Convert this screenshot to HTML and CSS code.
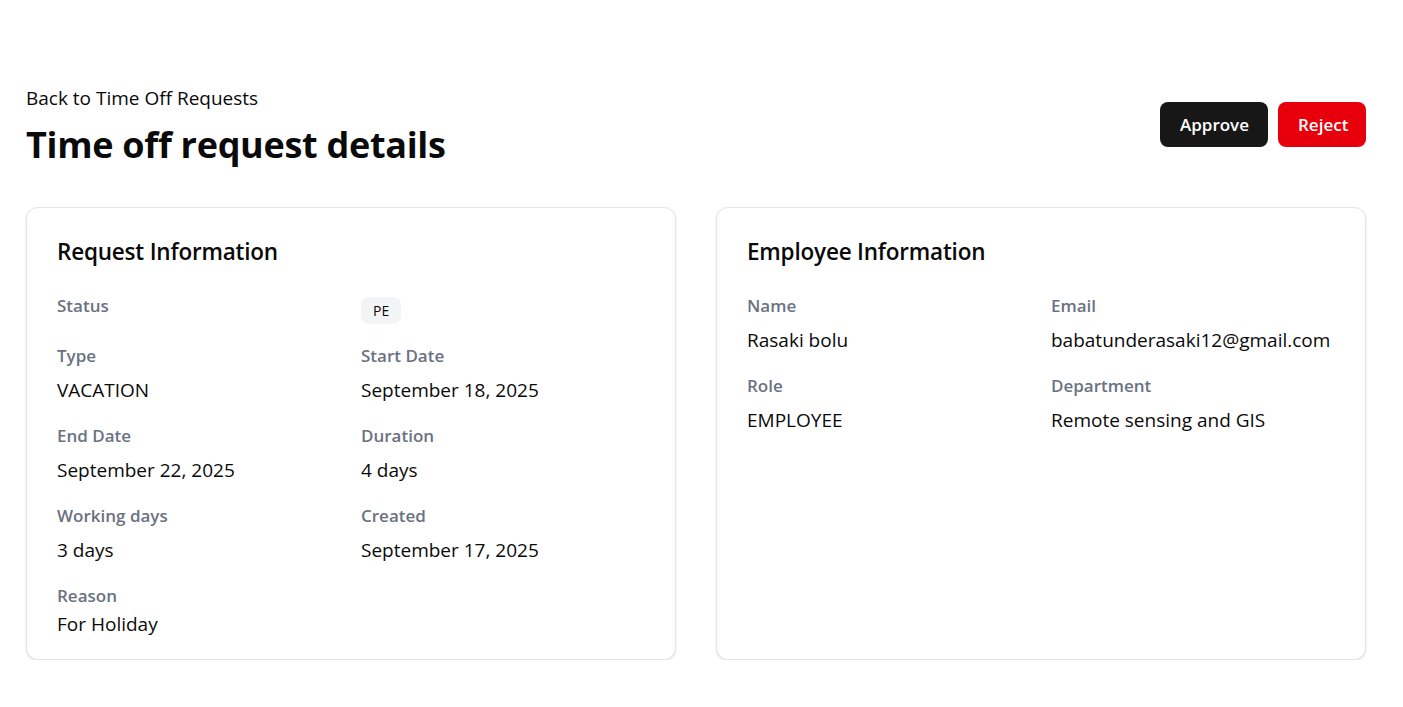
FILE: index.html
```html
<!DOCTYPE html>
<html lang="en">
<head>
<meta charset="utf-8">
<title>Time off request details</title>
<link rel="stylesheet" href="styles.css">
</head>
<body>
<main class="page">
  <header class="page-header">
    <div class="title-block">
      <a class="back-link" href="#">Back to Time Off Requests</a>
      <h1 class="page-title">Time off request details</h1>
    </div>
    <div class="actions">
      <button class="btn btn-approve" type="button">Approve</button>
      <button class="btn btn-reject" type="button">Reject</button>
    </div>
  </header>

  <section class="cards">
    <article class="card">
      <h2 class="card-title">Request Information</h2>
      <div class="info-grid">
        <div class="label">Status</div>
        <div><span class="badge">PE</span></div>

        <div class="field">
          <div class="label">Type</div>
          <div class="value">VACATION</div>
        </div>
        <div class="field">
          <div class="label">Start Date</div>
          <div class="value">September 18, 2025</div>
        </div>

        <div class="field">
          <div class="label">End Date</div>
          <div class="value">September 22, 2025</div>
        </div>
        <div class="field">
          <div class="label">Duration</div>
          <div class="value">4 days</div>
        </div>

        <div class="field">
          <div class="label">Working days</div>
          <div class="value">3 days</div>
        </div>
        <div class="field">
          <div class="label">Created</div>
          <div class="value">September 17, 2025</div>
        </div>

        <div class="field field-wide">
          <div class="label">Reason</div>
          <div class="value value-tight">For Holiday</div>
        </div>
      </div>
    </article>

    <article class="card">
      <h2 class="card-title">Employee Information</h2>
      <div class="info-grid">
        <div class="field">
          <div class="label">Name</div>
          <div class="value">Rasaki bolu</div>
        </div>
        <div class="field">
          <div class="label">Email</div>
          <div class="value">babatunderasaki12@gmail.com</div>
        </div>
        <div class="field">
          <div class="label">Role</div>
          <div class="value">EMPLOYEE</div>
        </div>
        <div class="field">
          <div class="label">Department</div>
          <div class="value">Remote sensing and GIS</div>
        </div>
      </div>
    </article>
  </section>
</main>
</body>
</html>
```

FILE: styles.css
```css
* {
  box-sizing: border-box;
}

html, body {
  margin: 0;
  padding: 0;
  background: #ffffff;
}

body {
  font-family: "Open Sans", "Noto Sans", "Liberation Sans", sans-serif;
  color: #0a0a0a;
}

.page {
  width: 1340px;
  margin-left: 26px;
  padding-top: 84px;
}

.page-header {
  display: flex;
  align-items: center;
  justify-content: space-between;
  margin-bottom: 40px;
}

.title-block {
  display: flex;
  flex-direction: column;
}

.back-link {
  font-size: 19px;
  line-height: 28px;
  color: #0a0a0a;
  text-decoration: none;
}

.page-title {
  margin: 11px 0 0;
  font-size: 36px;
  line-height: 44px;
  font-weight: 700;
  letter-spacing: -0.3px;
}

.actions {
  display: flex;
  gap: 10px;
  margin-top: -2px;
}

.btn {
  height: 45px;
  border: none;
  border-radius: 8px;
  padding: 0 20px;
  font-family: inherit;
  font-size: 17px;
  font-weight: 600;
  color: #ffffff;
  cursor: pointer;
}

.btn-approve {
  background: #171717;
  width: 108px;
}

.btn-reject {
  background: #e7000b;
  width: 88px;
}

.cards {
  display: grid;
  grid-template-columns: 650px 650px;
  column-gap: 40px;
}

.card {
  border: 1px solid #e5e5e5;
  border-radius: 12px;
  box-shadow: 0 1px 3px rgba(0, 0, 0, 0.08), 0 1px 2px rgba(0, 0, 0, 0.04);
  padding: 28px 30px 21px;
  background: #ffffff;
}

.card-title {
  margin: 0 0 26px;
  font-size: 22.5px;
  line-height: 32px;
  font-weight: 600;
  letter-spacing: -0.2px;
}

.info-grid {
  display: grid;
  grid-template-columns: 284px 284px;
  column-gap: 20px;
  row-gap: 20px;
}

.field {
  display: flex;
  flex-direction: column;
  gap: 8px;
}

.field-wide {
  grid-column: 1 / -1;
}

.label {
  font-size: 17px;
  line-height: 24px;
  font-weight: 600;
  color: #6a7282;
}

.value {
  font-size: 19px;
  line-height: 28px;
}

.value-tight {
  margin-top: -6px;
}

.badge {
  display: inline-block;
  margin-top: 3px;
  padding: 0 12px;
  height: 27px;
  line-height: 27px;
  border-radius: 8px;
  background: #f3f4f6;
  font-size: 14px;
  font-weight: 500;
}
```
